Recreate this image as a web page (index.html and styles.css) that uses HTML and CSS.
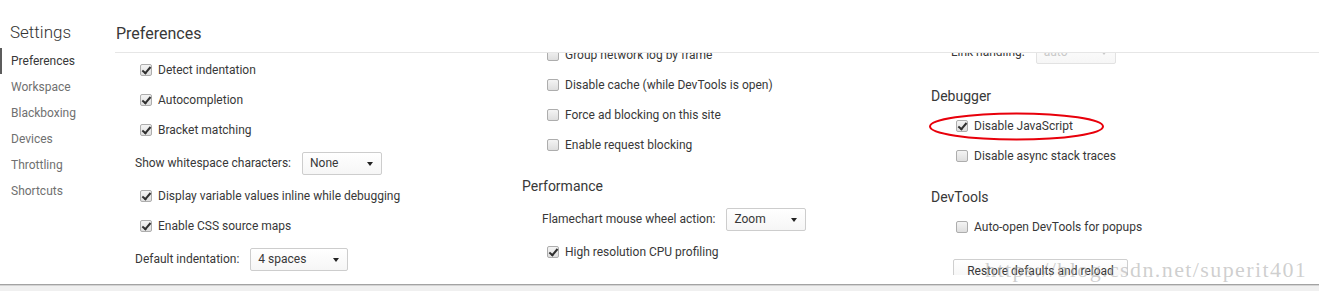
FILE: index.html
```html
<!DOCTYPE html>
<html lang="en">
<head>
    <meta charset="UTF-8">
    <title>Settings - Preferences</title>
    <link rel="stylesheet" href="styles.css">
</head>
<body>
    <div class="settings">
        <aside class="sidebar">
            <div class="sidebar-title">Settings</div>
            <ul class="nav">
                <li class="active">Preferences</li>
                <li>Workspace</li>
                <li>Blackboxing</li>
                <li>Devices</li>
                <li>Throttling</li>
                <li>Shortcuts</li>
            </ul>
        </aside>

        <main class="panel">
            <header class="panel-header">Preferences</header>

            <div class="panel-body">
                <div class="column col-sources">
                    <div class="row"><span class="check checked"></span>Detect indentation</div>
                    <div class="row"><span class="check checked"></span>Autocompletion</div>
                    <div class="row"><span class="check checked"></span>Bracket matching</div>
                    <div class="select-row">
                        <span>Show whitespace characters:</span>
                        <div class="select select-narrow">None</div>
                    </div>
                    <div class="row"><span class="check checked"></span>Display variable values inline while debugging</div>
                    <div class="row"><span class="check checked"></span>Enable CSS source maps</div>
                    <div class="select-row">
                        <span>Default indentation:</span>
                        <div class="select select-wide">4 spaces</div>
                    </div>
                </div>

                <div class="column col-network">
                    <div class="row"><span class="check"></span>Group network log by frame</div>
                    <div class="row"><span class="check"></span>Disable cache (while DevTools is open)</div>
                    <div class="row"><span class="check"></span>Force ad blocking on this site</div>
                    <div class="row"><span class="check"></span>Enable request blocking</div>

                    <div class="section">
                        <div class="section-title">Performance</div>
                        <div class="select-row">
                            <span>Flamechart mouse wheel action:</span>
                            <div class="select select-narrow">Zoom</div>
                        </div>
                        <div class="row"><span class="check checked"></span>High resolution CPU profiling</div>
                    </div>
                </div>

                <div class="column col-debugger">
                    <div class="select-row">
                        <span>Link handling:</span>
                        <div class="select select-narrow disabled">auto</div>
                    </div>

                    <div class="section">
                        <div class="section-title">Debugger</div>
                        <div class="row"><span class="check checked"></span>Disable JavaScript</div>
                        <div class="row"><span class="check"></span>Disable async stack traces</div>
                    </div>

                    <div class="section">
                        <div class="section-title">DevTools</div>
                        <div class="row"><span class="check"></span>Auto-open DevTools for popups</div>
                        <button class="restore-btn">Restore defaults and reload</button>
                    </div>
                </div>
            </div>
        </main>
    </div>
    <div class="statusbar"></div>

    <!-- hand-drawn mark and watermark on the screenshot -->
    <svg class="annotation" width="178" height="30" viewBox="0 0 178 30">
        <ellipse cx="88.5" cy="14.5" rx="86.5" ry="13" fill="none" stroke="#e8000b" stroke-width="2"/>
    </svg>
    <div class="watermark">https://blog.csdn.net/superit401</div>
</body>
</html>
```
FILE: styles.css
```css
/* Reset and global styles */
* {
    margin: 0;
    padding: 0;
    box-sizing: border-box;
}

body {
    font-family: Roboto, "Liberation Sans", sans-serif;
    font-size: 12px;
    color: #383838;
    background-color: #ffffff;
    overflow: hidden;
}

.settings {
    display: flex;
    height: 284px;
}

/* Sidebar */
.sidebar {
    width: 115px;
    flex: none;
}

.sidebar-title {
    height: 48px;
    padding: 20px 0 0 10px;
    font-size: 17px;
    font-weight: 300;
    line-height: 24px;
    color: #333;
}

.nav {
    list-style: none;
}

.nav li {
    height: 26px;
    line-height: 26px;
    padding-left: 11px;
    color: #707070;
}

.nav li.active {
    border-left: 2px solid #5c5c5c;
    padding-left: 9px;
    color: #383838;
}

/* Main panel */
.panel {
    flex: 1;
    min-width: 0;
}

.panel-header {
    height: 53px;
    padding: 22px 0 0 1px;
    font-size: 16px;
    line-height: 24px;
    color: #383838;
    border-bottom: 1px solid #e6e6e6;
}

.panel-body {
    display: flex;
    align-items: flex-start;
    height: 222px;
    overflow: hidden;
}

.column {
    flex: none;
}

.col-sources {
    width: 407px;
    margin-top: 2px;
}

.col-network {
    width: 409px;
    margin-top: -13px;
}

.col-debugger {
    width: 408px;
    margin-top: -19px;
}

/* Rows */
.row {
    display: flex;
    align-items: center;
    height: 30px;
    padding-left: 25px;
    white-space: nowrap;
}

.select-row {
    display: flex;
    align-items: center;
    height: 36px;
    padding-left: 20px;
    white-space: nowrap;
}

.section {
    margin-top: 11px;
}

.section-title {
    height: 30px;
    line-height: 30px;
    font-size: 14px;
    color: #383838;
}

/* Checkboxes */
.check {
    position: relative;
    width: 12px;
    height: 12px;
    margin-right: 6px;
    flex: none;
    border: 1px solid #adadad;
    border-radius: 2px;
    background: linear-gradient(#f4f4f4, #dedede);
}

.check.checked::after {
    content: "";
    position: absolute;
    left: 3px;
    top: 0px;
    width: 3px;
    height: 7px;
    border-right: 2px solid #303030;
    border-bottom: 2px solid #303030;
    transform: rotate(40deg);
}

/* Selects */
.select {
    position: relative;
    height: 23px;
    margin-left: 11px;
    padding-left: 7px;
    line-height: 21px;
    font-size: 12px;
    color: #383838;
    border: 1px solid #cdcdcd;
    border-radius: 2px;
    background: linear-gradient(#ffffff, #f6f6f6);
}

.select::after {
    content: "";
    position: absolute;
    right: 8px;
    top: 9px;
    border-left: 3.5px solid transparent;
    border-right: 3.5px solid transparent;
    border-top: 4px solid #222;
}

.select-narrow {
    width: 80px;
}

.select-wide {
    width: 98px;
}

.select.disabled {
    color: #c8c8c8;
    border-color: #e2e2e2;
}

.select.disabled::after {
    border-top-color: #c8c8c8;
}

/* Restore button */
.restore-btn {
    display: block;
    width: 175px;
    height: 24px;
    margin: 17px 0 0 22px;
    font-family: Roboto, "Liberation Sans", sans-serif;
    font-size: 12px;
    color: #383838;
    border: 1px solid #cfcfcf;
    border-radius: 2px;
    background: linear-gradient(#ffffff, #f4f4f4);
}

/* Bottom strip */
.statusbar {
    height: 7px;
    border-top: 1px solid #a3a3a3;
    box-shadow: inset 0 1px 0 #d4d4d4;
    background-color: #f0f0f0;
}

/* Overlays from the screenshot */
.annotation {
    position: absolute;
    left: 928px;
    top: 112px;
}

.watermark {
    position: absolute;
    left: 985px;
    top: 259px;
    font-family: "Liberation Serif", serif;
    font-size: 22px;
    line-height: 22px;
    letter-spacing: 1.4px;
    color: rgba(175, 175, 175, 0.6);
    white-space: nowrap;
}
```
